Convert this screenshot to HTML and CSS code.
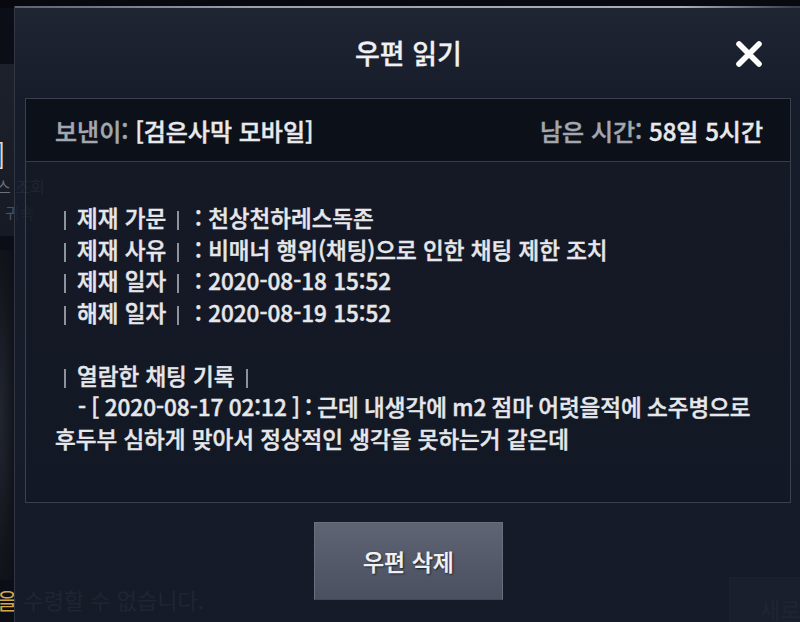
FILE: index.html
```html
<!DOCTYPE html>
<html lang="ko">
<head>
<meta charset="utf-8">
<title>우편 읽기</title>
<link rel="stylesheet" href="styles.css">
</head>
<body>
<div class="scene">
  <div class="backdrop">
    <div class="bd-top"></div>
    <div class="bd-strip"></div>
    <div class="bd-bracket">]</div>
    <div class="bd-sub">스 조회</div>
    <div class="bd-sub2">· 귀속</div>
    <div class="bd-art"></div>
    <div class="bd-notice"><span class="gold">을</span> 수령할 수 없습니다.</div>
    <div class="bd-btn">새로</div>
  </div>
  <div class="modal">
    <header class="modal-head">
      <span class="head-spacer"></span>
      <h1 class="modal-title">우편 읽기</h1>
      <button class="close" aria-label="닫기">
        <svg width="28" height="28" viewBox="0 0 28 28"><path d="M4 4 L24 24 M24 4 L4 24" stroke="#ffffff" stroke-width="5.6" stroke-linecap="round" fill="none"/></svg>
      </button>
    </header>
    <section class="mail">
      <div class="mail-meta">
        <div class="meta-item"><span class="key">보낸이:</span> <span class="val">[검은사막 모바일]</span></div>
        <div class="meta-item"><span class="key">남은 시간:</span> <span class="val"><span class="num">58</span>일 <span class="num">5</span>시간</span></div>
      </div>
      <div class="mail-body">
        <div class="rec"><i class="bar"></i><span class="lbl">제재 가문</span><i class="bar sep"></i><span>: 천상천하레스독존</span></div>
        <div class="rec"><i class="bar"></i><span class="lbl">제재 사유</span><i class="bar sep"></i><span>: 비매너 행위(채팅)으로 인한 채팅 제한 조치</span></div>
        <div class="rec"><i class="bar"></i><span class="lbl">제재 일자</span><i class="bar sep"></i><span>: <span class="num">2020-08-18 15:52</span></span></div>
        <div class="rec"><i class="bar"></i><span class="lbl">해제 일자</span><i class="bar sep"></i><span>: <span class="num">2020-08-19 15:52</span></span></div>
        <div class="blank"></div>
        <div class="rec"><i class="bar"></i><span class="lbl">열람한 채팅 기록</span><i class="bar sep"></i></div>
        <div class="chat">
          <div class="chat-line first">- [ <span class="num">2020-08-17 02:12</span> ] : 근데 내생각에 <span class="num">m2</span> 점마 어렷을적에 소주병으로</div>
          <div class="chat-line">후두부 심하게 맞아서 정상적인 생각을 못하는거 같은데</div>
        </div>
      </div>
    </section>
    <div class="actions">
      <button class="delete">우편 삭제</button>
    </div>
  </div>
</div>
</body>
</html>
```

FILE: styles.css
```css
* { box-sizing: border-box; }
html, body { margin: 0; padding: 0; }
body {
  background: #0b0e16;
  font-family: "Noto Sans CJK KR", "Noto Sans", sans-serif;
  overflow: hidden;
}
.scene {
  position: relative;
  width: 800px;
  height: 622px;
  overflow: hidden;
}

/* background scene (behind the dialog) */
.backdrop { position: absolute; inset: 0; }
.bd-top {
  position: absolute; left: 0; top: 0; width: 800px; height: 8px;
  background: #07090e;
}
.bd-strip {
  position: absolute; left: 0; top: 64px; width: 15px; height: 172px;
  background: linear-gradient(180deg, #1c212c, #161a24);
}
.bd-bracket {
  position: absolute; left: -4px; top: 140px;
  font-size: 28px; color: #d6d9df; line-height: 1;
}
.bd-sub {
  position: absolute; left: -4px; top: 178px;
  font-size: 16px; color: #6c717c; line-height: 1;
}
.bd-sub2 {
  position: absolute; left: -4px; top: 204px;
  font-size: 16px; color: #4a4f5a; line-height: 1;
}
.bd-art {
  position: absolute; left: 0; top: 250px; width: 16px; height: 330px;
  background: radial-gradient(ellipse at 0 50%, #22262f 0, #12151c 60%, #0b0e16 100%);
}
.bd-notice {
  position: absolute; left: -3px; top: 585px;
  font-size: 22px; line-height: 28px; color: #5c606b; white-space: nowrap;
}
.bd-notice .gold { color: #d4a648; }
.bd-btn {
  position: absolute; left: 729px; top: 577px; width: 110px; height: 70px;
  background: #2a2f3f; border: 1px solid #3d4354;
  font-size: 22px; color: #5e6373; padding: 14px 0 0 30px;
}

/* dialog */
.modal {
  position: absolute; left: 14px; top: 6px; width: 788px; height: 640px;
  background:
    linear-gradient(90deg, #5c6271 0, #9ca1ac 30%, #a9aeb8 85%, rgba(169,174,184,0.2) 99%) top left / 100% 2px no-repeat,
    linear-gradient(180deg, rgba(34,40,55,0.88) 0, rgba(25,30,44,0.88) 90px, rgba(23,28,42,0.88) 100%);
  border-left: 1px solid rgba(60,66,80,0.7);
  display: flex; flex-direction: column;
}
.modal-head {
  height: 92px;
  display: grid;
  grid-template-columns: 1fr auto 1fr;
  align-items: center;
}
.modal-title {
  margin: 0;
  font-size: 27px; font-weight: 500; line-height: 1;
  color: #f1f1f3;
  padding-top: 1px;
  -webkit-text-stroke: 0.3px #f1f1f3;
}
.close {
  justify-self: end;
  margin-right: 39px;
  width: 28px; height: 28px; padding: 0;
  background: none; border: 0;
  display: flex; margin-top: 3px;
}

.mail {
  margin-left: 10px;
  width: 766px;
  border: 1px solid #3a404e;
}
.mail-meta {
  height: 63px;
  border-bottom: 1px solid #353b49;
  background: rgba(5,7,13,0.55);
  display: flex; justify-content: space-between; align-items: center;
  padding: 0 27px 0 29px;
  font-size: 24px; font-weight: 500;
  color: #e8e9ec;
  -webkit-text-stroke: 0.45px currentColor;
}
.meta-item { white-space: nowrap; }
.key { color: #a3a7b0; }
.val { color: #e8e9ec; }

.mail-body {
  height: 340px;
  padding: 40px 0 0 29px;
  font-size: 22.5px; font-weight: 500;
  line-height: 31.5px;
  color: #e6e7ea;
  background: rgba(5,7,13,0.12);
  -webkit-text-stroke: 0.45px currentColor;
}
.rec { height: 31.5px; padding-left: 9px; white-space: nowrap; }
.bar {
  display: inline-block;
  width: 2px; height: 19px;
  background: #8e929b;
  vertical-align: -3px;
  margin-right: 11px;
}
.bar.sep { margin: 0 16px 0 11px; }
.blank { height: 31.5px; }
.chat-line { height: 31.5px; white-space: nowrap; }
.chat-line.first { padding-left: 23px; word-spacing: -1px; }
.num { letter-spacing: 0; }

.actions {
  display: flex; justify-content: center;
  margin-top: 19px;
}
.delete {
  width: 189px; height: 78px;
  font-family: "Noto Sans CJK KR", sans-serif;
  font-size: 23px; font-weight: 500;
  color: #f2f2f4;
  background: linear-gradient(180deg, #5f6475 0, #555a6b 50%, #4b5061 100%);
  border: 1px solid #6a6f80;
  border-bottom-color: #444959;
  text-shadow: 1px 1px 2px rgba(0,0,0,0.8);
  -webkit-text-stroke: 0.3px #f2f2f4;
  padding: 0;
}
```
